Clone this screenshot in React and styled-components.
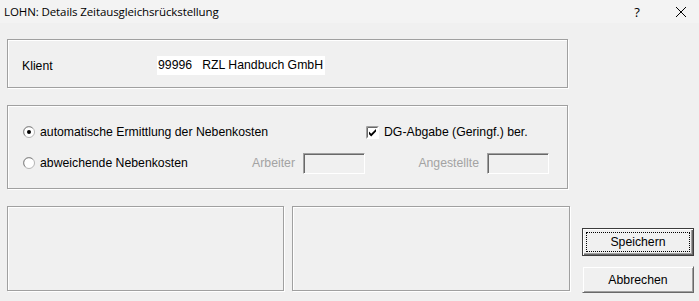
import styled, { createGlobalStyle } from 'styled-components';

const Global = createGlobalStyle`
	html, body {
		margin: 0;
		padding: 0;
		width: 699px;
		height: 301px;
		overflow: hidden;
		background: #f0f0f0;
	}
	body {
		font-family: "Liberation Sans", Arial, sans-serif;
		font-size: 12.25px;
		color: #000;
	}
`;

const Window = styled.div`
	width: 699px;
	height: 301px;
	display: flex;
	flex-direction: column;
	background: #f0f0f0;
`;

const TitleBar = styled.div`
	height: 23px;
	flex: none;
	display: flex;
	align-items: center;
	background: #f3f3f3;
	padding-left: 4px;
	font-family: "Open Sans", "Noto Sans", sans-serif;
	font-size: 11.5px;
	color: #000;
`;

const TitleText = styled.div`
	flex: 1;
	letter-spacing: -0.1px;
`;

const TitleButton = styled.div`
	width: ${p => p.width}px;
	height: 23px;
	display: flex;
	align-items: center;
	justify-content: center;
	font-size: 13px;
`;

const Content = styled.div`
	padding: 16px 0 0 7px;
	display: flex;
	flex-direction: column;
	gap: 17px;
`;

const GroupBox = styled.div`
	box-sizing: border-box;
	width: ${p => p.width || 561}px;
	height: ${p => p.height}px;
	border: 1px solid #a0a0a0;
	box-shadow: 1px 1px 0 #fff, inset 1px 1px 0 #fff;
`;

const KlientBox = styled(GroupBox)`
	display: flex;
	align-items: center;
	padding: 4px 0 0 14px;
`;

const Label = styled.div`
	width: 135px;
`;

const ValueField = styled.div`
	background: #fff;
	height: 19px;
	line-height: 19px;
	padding: 0 2px 0 1px;
	white-space: pre;
`;

const OptionsBox = styled(GroupBox)`
	display: flex;
	flex-direction: column;
	gap: 11px;
	padding: 16px 0 0 15px;
`;

const Row = styled.div`
	display: flex;
	align-items: center;
	height: 20px;
`;

const Option = styled.div`
	width: ${p => p.width}px;
	display: flex;
	align-items: center;
	gap: 5px;
	white-space: nowrap;
`;

const FieldLabel = styled.div`
	width: ${p => p.width}px;
	text-align: right;
	color: #a3a3a3;
	padding-right: 8px;
	box-sizing: border-box;
`;

const SunkenInput = styled.div`
	box-sizing: border-box;
	width: 62px;
	height: 21px;
	border-top: 1px solid #a0a0a0;
	border-left: 1px solid #a0a0a0;
	border-right: 1px solid #fff;
	border-bottom: 1px solid #fff;
	box-shadow: inset 1px 1px 0 #696969;
	background: #f0f0f0;
`;

const BottomRow = styled.div`
	display: flex;
	gap: 8px;
`;

const ButtonColumn = styled.div`
	display: flex;
	flex-direction: column;
	gap: 10px;
	padding: 22px 0 0 4px;
`;

const Button = styled.div`
	box-sizing: border-box;
	width: 112px;
	height: ${p => (p.primary ? 28 : 27)}px;
	display: flex;
	align-items: center;
	justify-content: center;
	background: #f0f0f0;
	border: 1px solid ${p => (p.primary ? '#3c3c3c' : 'transparent')};
	box-shadow: inset 1px 1px 0 #fff, inset -1px -1px 0 #696969, inset -2px -2px 0 #a0a0a0;
	position: relative;
	${p => !p.primary && `
		border-right: 1px solid #696969;
		border-bottom: 1px solid #696969;
		box-shadow: inset 1px 1px 0 #fff, inset -1px -1px 0 #a0a0a0;
	`}
`;

const Focus = styled.div`
	position: absolute;
	inset: 3px;
	border: 1px dotted #000;
`;

function Radio({ checked }) {
	return (
		<svg width="12" height="12" viewBox="0 0 12 12">
			<circle cx="6" cy="6" r="5.5" fill="#fff" stroke="#b4b4b4" />
			<path d="M2.2 9.6 A5 5 0 0 1 9.6 2.2" fill="none" stroke="#8a8a8a" strokeWidth="1" />
			{checked && <circle cx="6" cy="6" r="2" fill="#000" />}
		</svg>
	);
}

function Checkbox() {
	return (
		<svg width="13" height="13" viewBox="0 0 13 13">
			<rect x="0" y="0" width="13" height="13" fill="#fff" />
			<path d="M0.5 12.5 V0.5 H12.5" fill="none" stroke="#a0a0a0" />
			<path d="M1.5 11.5 V1.5 H11.5" fill="none" stroke="#696969" />
			<path d="M3 5.6 L5.2 7.8 L10 3 L10 5.6 L5.2 10.4 L3 8.2 Z" fill="#000" />
		</svg>
	);
}

export default function App() {
	return (
		<Window>
			<Global />
			<TitleBar>
				<TitleText>LOHN: Details Zeitausgleichsrückstellung</TitleText>
				<TitleButton width={52}>?</TitleButton>
				<TitleButton width={36}>
					<svg width="10" height="10" viewBox="0 0 10 10">
						<path d="M0 0 L10 10 M10 0 L0 10" stroke="#000" strokeWidth="1" />
					</svg>
				</TitleButton>
			</TitleBar>
			<Content>
				<KlientBox height={49}>
					<Label>Klient</Label>
					<ValueField>{'99996   RZL Handbuch GmbH'}</ValueField>
				</KlientBox>
				<OptionsBox height={84}>
					<Row>
						<Option width={343}>
							<Radio checked />
							automatische Ermittlung der Nebenkosten
						</Option>
						<Option>
							<Checkbox />
							DG-Abgabe (Geringf.) ber.
						</Option>
					</Row>
					<Row>
						<Option width={220}>
							<Radio />
							abweichende Nebenkosten
						</Option>
						<FieldLabel width={60}>Arbeiter</FieldLabel>
						<SunkenInput />
						<FieldLabel width={122}>Angestellte</FieldLabel>
						<SunkenInput />
					</Row>
				</OptionsBox>
				<BottomRow>
					<GroupBox width={277} height={85} />
					<GroupBox width={278} height={85} />
					<ButtonColumn>
						<Button primary>
							<Focus />
							Speichern
						</Button>
						<Button>Abbrechen</Button>
					</ButtonColumn>
				</BottomRow>
			</Content>
		</Window>
	);
}
